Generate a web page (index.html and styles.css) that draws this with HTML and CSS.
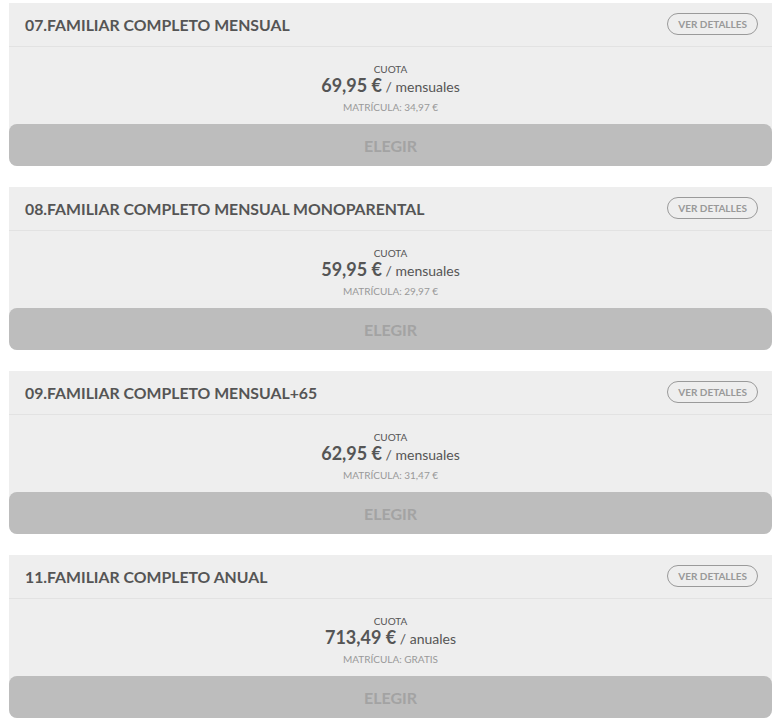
FILE: index.html
```html
<!DOCTYPE html>
<html lang="es">
  <head>
    <meta charset="UTF-8" />
    <meta name="viewport" content="width=device-width, initial-scale=1.0" />
    <title>Tarifas</title>
    <link rel="stylesheet" href="styles.css">
  </head>
  <body>
    <div class="tarifas">
      <div class="tarifa">
        <div class="tarifa-cabecera">
          <h3>07.FAMILIAR COMPLETO MENSUAL</h3>
          <button type="button" class="detalles">VER DETALLES</button>
        </div>
        <div class="tarifa-cuerpo">
          <span class="cuota">CUOTA</span>
          <div class="precio"><strong>69,95 €</strong> / mensuales</div>
          <span class="matricula">MATRÍCULA: 34,97 €</span>
        </div>
        <button type="button" class="elegir">ELEGIR</button>
      </div>
      <div class="tarifa">
        <div class="tarifa-cabecera">
          <h3>08.FAMILIAR COMPLETO MENSUAL MONOPARENTAL</h3>
          <button type="button" class="detalles">VER DETALLES</button>
        </div>
        <div class="tarifa-cuerpo">
          <span class="cuota">CUOTA</span>
          <div class="precio"><strong>59,95 €</strong> / mensuales</div>
          <span class="matricula">MATRÍCULA: 29,97 €</span>
        </div>
        <button type="button" class="elegir">ELEGIR</button>
      </div>
      <div class="tarifa">
        <div class="tarifa-cabecera">
          <h3>09.FAMILIAR COMPLETO MENSUAL+65</h3>
          <button type="button" class="detalles">VER DETALLES</button>
        </div>
        <div class="tarifa-cuerpo">
          <span class="cuota">CUOTA</span>
          <div class="precio"><strong>62,95 €</strong> / mensuales</div>
          <span class="matricula">MATRÍCULA: 31,47 €</span>
        </div>
        <button type="button" class="elegir">ELEGIR</button>
      </div>
      <div class="tarifa">
        <div class="tarifa-cabecera">
          <h3>11.FAMILIAR COMPLETO ANUAL</h3>
          <button type="button" class="detalles">VER DETALLES</button>
        </div>
        <div class="tarifa-cuerpo">
          <span class="cuota">CUOTA</span>
          <div class="precio"><strong>713,49 €</strong> / anuales</div>
          <span class="matricula">MATRÍCULA: GRATIS</span>
        </div>
        <button type="button" class="elegir">ELEGIR</button>
      </div>
    </div>
  </body>
</html>
```

FILE: styles.css
```css
body {
  margin: 0;
  background-color: #ffffff;
  font-family: Lato, "Open Sans", sans-serif;
  color: #555555;
}
.tarifas {
  display: flex;
  flex-direction: column;
  gap: 21px;
  padding: 3px 6px 0 9px;
}
.tarifa {
  display: flex;
  flex-direction: column;
  background-color: #eeeeee;
  border-radius: 0 0 8px 8px;
}
.tarifa-cabecera {
  display: flex;
  justify-content: space-between;
  align-items: center;
  height: 43px;
  padding: 0 14px 0 16px;
  border-bottom: 1px solid #e2e2e2;
}
.tarifa-cabecera h3 {
  margin: 0;
  font-size: 15.8px;
  font-weight: 700;
  color: #555555;
}
.detalles {
  height: 22px;
  margin-bottom: 1px;
  padding: 0 10px;
  background: transparent;
  border: 1px solid #9a9a9a;
  border-radius: 11px;
  font-family: inherit;
  font-size: 10px;
  font-weight: 700;
  color: #999999;
  cursor: pointer;
}
.tarifa-cuerpo {
  display: flex;
  flex-direction: column;
  align-items: center;
  height: 77px;
  padding-top: 16px;
  box-sizing: border-box;
}
.cuota {
  font-size: 10px;
  line-height: 12px;
  color: #555555;
}
.precio {
  font-size: 14px;
  line-height: 20px;
  color: #555555;
}
.precio strong {
  font-size: 18px;
  font-weight: 700;
}
.matricula {
  margin-top: 4px;
  font-size: 10px;
  line-height: 12px;
  color: #999999;
}
.elegir {
  height: 42px;
  background-color: #bdbdbd;
  border: none;
  border-radius: 8px;
  font-family: inherit;
  font-size: 16px;
  font-weight: 700;
  color: #a3a3a3;
  cursor: pointer;
}
```
